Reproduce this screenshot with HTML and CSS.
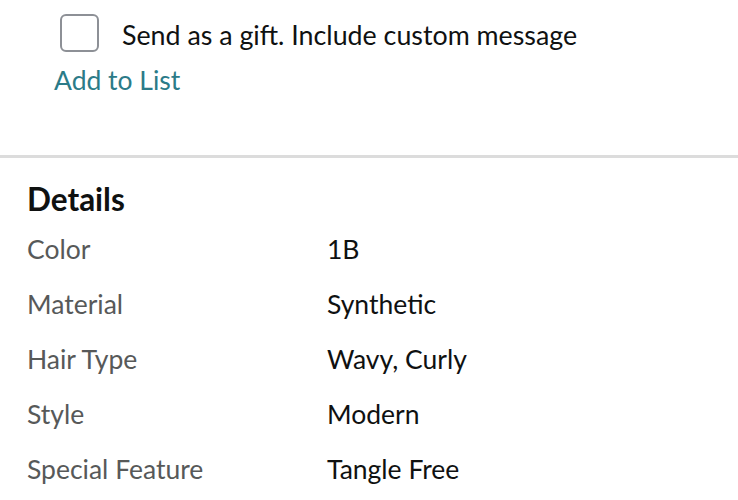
FILE: index.html
```html
<!DOCTYPE html>
<html>
<head>
<meta charset="utf-8">
<link rel="stylesheet" href="styles.css">
</head>
<body>
<div class="top">
  <label class="gift">
    <span class="box"></span>
    <span class="gift-text">Send as a gift. Include custom message</span>
  </label>
  <a class="add-list">Add to List</a>
</div>
<div class="divider"></div>
<section class="details">
  <h2 class="title">Details</h2>
  <div class="row"><span class="label">Color</span><span class="value">1B</span></div>
  <div class="row"><span class="label">Material</span><span class="value">Synthetic</span></div>
  <div class="row"><span class="label">Hair Type</span><span class="value">Wavy, Curly</span></div>
  <div class="row"><span class="label">Style</span><span class="value">Modern</span></div>
  <div class="row"><span class="label">Special Feature</span><span class="value">Tangle Free</span></div>
</section>
</body>
</html>
```
FILE: styles.css
```css
html, body {
  margin: 0;
  padding: 0;
  background: #fff;
}
body {
  font-family: Lato, "Open Sans", sans-serif;
  color: #0f1111;
  width: 738px;
  height: 500px;
  overflow: hidden;
}
.top {
  padding: 14px 0 0 54px;
  height: 155px;
  box-sizing: border-box;
}
.gift {
  display: flex;
  align-items: flex-start;
  gap: 23px;
  padding-left: 6px;
}
.box {
  width: 35px;
  height: 34px;
  border: 2px solid #8d9096;
  border-radius: 6px;
  box-sizing: content-box;
  flex: none;
}
.gift-text {
  margin-top: 5px;
  font-size: 26.8px;
  line-height: 32px;
  color: #0f1111;
}
.add-list {
  display: block;
  margin-top: 12px;
  font-size: 26.5px;
  line-height: 32px;
  color: #2b7b88;
}
.divider {
  height: 3px;
  background: #dcdcdc;
}
.details {
  padding: 23px 0 0 27px;
}
.title {
  margin: 0 0 4px 0;
  font-size: 31.5px;
  font-weight: 700;
  line-height: 36px;
}
.row {
  display: grid;
  grid-template-columns: 300px 1fr;
  height: 55px;
  align-items: center;
  font-size: 26.5px;
}
.label {
  color: #575959;
}
.value {
  color: #0f1111;
}
```
